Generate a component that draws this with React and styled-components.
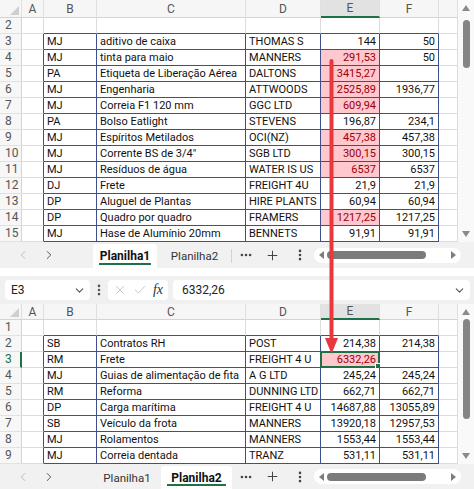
import React from 'react';
import styled, { createGlobalStyle, css } from 'styled-components';
import { ChevronLeft, ChevronRight, ChevronDown, Plus, EllipsisVertical, Ellipsis, X, Check } from 'lucide-react';

const GlobalStyle = createGlobalStyle`
  * { box-sizing: border-box; }
  body {
    margin: 0;
    background: #ffffff;
    font-family: Roboto, "Liberation Sans", Arial, sans-serif;
  }
`;

const NAVY = '#3d4f8c';
const GRID = '#dcdcdc';
const GREEN = '#1e7145';
const COLS = ['A', 'B', 'C', 'D', 'E', 'F', ''];
const WIDTHS = '22px 22px 53px 149px 75px 59px 59px 19px';

const topRows = [
  [2, []],
  [3, ['MJ', 'aditivo de caixa', 'THOMAS S', '144', '50']],
  [4, ['MJ', 'tinta para maio', 'MANNERS', '291,53', '50'], true],
  [5, ['PA', 'Etiqueta de Liberação Aérea', 'DALTONS', '3415,27', ''], true],
  [6, ['MJ', 'Engenharia', 'ATTWOODS', '2525,89', '1936,77'], true],
  [7, ['MJ', 'Correia F1 120 mm', 'GGC LTD', '609,94', ''], true],
  [8, ['PA', 'Bolso Eatlight', 'STEVENS', '196,87', '234,1']],
  [9, ['MJ', 'Espíritos Metilados', 'OCI(NZ)', '457,38', '457,38'], true],
  [10, ['MJ', 'Corrente BS de 3/4"', 'SGB LTD', '300,15', '300,15'], true],
  [11, ['MJ', 'Resíduos de água', 'WATER IS US', '6537', '6537'], true],
  [12, ['DJ', 'Frete', 'FREIGHT 4U', '21,9', '21,9']],
  [13, ['DP', 'Aluguel de Plantas', 'HIRE PLANTS', '60,94', '60,94']],
  [14, ['DP', 'Quadro por quadro', 'FRAMERS', '1217,25', '1217,25'], true],
  [15, ['MJ', 'Hase de Alumínio 20mm', 'BENNETS', '91,91', '91,91']],
];

const bottomRows = [
  [1, []],
  [2, ['SB', 'Contratos RH', 'POST', '214,38', '214,38']],
  [3, ['RM', 'Frete', 'FREIGHT 4 U', '6332,26', ''], true],
  [4, ['MJ', 'Guias de alimentação de fita', 'A G LTD', '245,24', '245,24']],
  [5, ['RM', 'Reforma', 'DUNNING LTD', '662,71', '662,71']],
  [6, ['DP', 'Carga marítima', 'FREIGHT 4 U', '14687,88', '13055,89']],
  [7, ['SB', 'Veículo da frota', 'MANNERS', '13920,18', '12957,53']],
  [8, ['MJ', 'Rolamentos', 'MANNERS', '1553,44', '1553,44']],
  [9, ['MJ', 'Correia dentada', 'TRANZ', '531,11', '531,11']],
];

const Page = styled.div`
  position: relative;
  width: 474px;
  height: 489px;
  overflow: hidden;
  display: flex;
  flex-direction: column;
`;

const Pane = styled.div`
  display: flex;
  height: ${({ $h }) => $h}px;
`;

const Grid = styled.div`
  display: grid;
  grid-template-columns: ${WIDTHS};
  grid-template-rows: ${({ $head }) => $head}px;
  grid-auto-rows: 16px;
  width: 458px;
  align-content: start;
`;

const HeadCell = styled.div`
  position: relative;
  background: ${({ $sel }) => ($sel ? '#e2e2e2' : '#f6f6f6')};
  border-right: 1px solid #e0e0e0;
  border-bottom: ${({ $sel }) => ($sel ? `2px solid ${GREEN}` : '1px solid #d4d4d4')};
  color: #555;
  font-size: 12px;
  display: flex;
  align-items: center;
  justify-content: center;
  ${({ $corner }) =>
    $corner &&
    css`
      &::after {
        content: '';
        position: absolute;
        right: 2px;
        bottom: 2px;
        border-left: 9px solid transparent;
        border-bottom: 9px solid #cfcfcf;
      }
    `}
`;

const RowNum = styled.div`
  background: #f7f7f7;
  border-bottom: 1px solid #e2e2e2;
  border-right: ${({ $sel }) => ($sel ? `2px solid ${GREEN}` : '1px solid #d4d4d4')};
  color: ${({ $sel }) => ($sel ? GREEN : '#555')};
  font-size: 12px;
  padding-left: 5px;
  line-height: 15px;
`;

const Cell = styled.div`
  position: relative;
  border-right: 1px solid ${({ $rb }) => $rb};
  border-bottom: 1px solid ${({ $bb }) => $bb};
  background: ${({ $hl }) => ($hl ? '#ffc7ce' : '#ffffff')};
  color: ${({ $hl }) => ($hl ? '#9c0006' : '#111')};
  font-size: 11px;
  line-height: 15px;
  padding: 0 3px;
  white-space: nowrap;
  overflow: hidden;
  text-align: ${({ $num }) => ($num ? 'right' : 'left')};
  ${({ $sel }) =>
    $sel &&
    css`
      overflow: visible;
      &::before {
        content: '';
        position: absolute;
        inset: -1px -1px -1px -1px;
        border: 2px solid ${GREEN};
      }
      &::after {
        content: '';
        position: absolute;
        right: -3px;
        bottom: -3px;
        width: 5px;
        height: 5px;
        background: ${GREEN};
        border: 1px solid #fff;
      }
    `}
`;

const VScroll = styled.div`
  width: 16px;
  background: #f9f9f9;
  display: flex;
  flex-direction: column;
  align-items: center;
  padding: 5px 0;
`;

const Arrow = styled.div`
  width: 0;
  height: 0;
  border-left: 4px solid transparent;
  border-right: 4px solid transparent;
  ${({ $down }) =>
    $down ? 'border-top: 6px solid #8a8a8a;' : 'border-bottom: 6px solid #8a8a8a;'}
`;

const Track = styled.div`
  flex: 1;
  width: 100%;
  display: flex;
  justify-content: center;
`;

const Thumb = styled.div`
  width: 7px;
  height: ${({ $h }) => $h}px;
  margin-top: ${({ $top }) => $top}px;
  border-radius: 4px;
  background: #858585;
`;

const TabBar = styled.div`
  height: ${({ $h }) => $h}px;
  background: #f1f1f1;
  display: flex;
  align-items: center;
  padding-left: 10px;
`;

const NavBtn = styled.div`
  width: 26px;
  display: flex;
  justify-content: center;
  color: ${({ $off }) => ($off ? '#b5b5b5' : '#444')};
`;

const Tabs = styled.div`
  margin-left: 31px;
  display: flex;
  align-self: stretch;
  align-items: stretch;
`;

const Tab = styled.div`
  position: relative;
  width: ${({ $w }) => $w}px;
  display: flex;
  align-items: center;
  justify-content: center;
  font-size: ${({ $active }) => ($active ? '12px' : '11.5px')};
  font-weight: ${({ $active }) => ($active ? 700 : 400)};
  color: ${({ $active }) => ($active ? '#111' : '#333')};
  background: ${({ $active }) => ($active ? '#ffffff' : 'transparent')};
  margin-top: 2px;
  border-radius: 3px 3px 0 0;
  ${({ $active }) =>
    $active &&
    css`
      &::after {
        content: '';
        position: absolute;
        left: 6px;
        right: 6px;
        bottom: 3px;
        height: 2px;
        background: ${GREEN};
      }
    `}
  ${({ $sep }) =>
    $sep &&
    css`
      &::before {
        content: '';
        position: absolute;
        right: 0;
        top: 5px;
        bottom: 5px;
        width: 1px;
        background: #d2d2d2;
      }
    `}
`;

const ToolBtn = styled.div`
  width: 27px;
  display: flex;
  justify-content: center;
  color: #444;
`;

const HScroll = styled.div`
  margin-left: 1px;
  width: 147px;
  height: 15px;
  border-radius: 8px;
  background: #ffffff;
  display: flex;
  align-items: center;
  padding: 0 5px;
  gap: 3px;
`;

const HArrow = styled.div`
  width: 0;
  height: 0;
  border-top: 4px solid transparent;
  border-bottom: 4px solid transparent;
  ${({ $right }) =>
    $right ? 'border-left: 5px solid #7d7d7d; margin-left: auto;' : 'border-right: 5px solid #7d7d7d;'}
`;

const HThumb = styled.div`
  width: 99px;
  height: 8px;
  border-radius: 4px;
  background: #7b7b7b;
`;

const Gap = styled.div`
  height: 8px;
  background: #ffffff;
`;

const FormulaBar = styled.div`
  height: 28px;
  background: #f0f0f0;
  display: flex;
  align-items: center;
  padding: 0 4px 0 5px;
`;

const Box = styled.div`
  height: 20px;
  background: #ffffff;
  border-radius: 4px;
  display: flex;
  align-items: center;
  font-size: 12px;
  color: #222;
`;

const NameBox = styled(Box)`
  width: 85px;
  padding: 0 4px 0 6px;
  justify-content: space-between;
`;

const Dots = styled.div`
  width: 18px;
  display: flex;
  justify-content: center;
  color: #555;
`;

const IconBox = styled(Box)`
  width: 60px;
  padding: 0 4px 0 5px;
  justify-content: space-between;
  color: #bbbbbb;
`;

const Fx = styled.span`
  font-family: "Liberation Serif", serif;
  font-style: italic;
  font-size: 14px;
  color: #333;
  padding-right: 1px;
`;

const InputBox = styled(Box)`
  flex: 1;
  margin-left: 5px;
  padding: 0 4px 0 9px;
  justify-content: space-between;
`;

const ArrowOverlay = styled.svg`
  position: absolute;
  left: 321px;
  top: 58px;
`;

const Sheet = ({ rows, head, tableFrom, selRow }) => {
  const lastRow = rows[rows.length - 1][0];
  const inTable = (r, c) => r >= tableFrom && r <= lastRow + 1 && c >= 1 && c <= 5;
  return (
    <Grid $head={head}>
      <HeadCell $corner />
      {COLS.map((c) => (
        <HeadCell key={c || 'g'} $sel={c === 'E'}>{c}</HeadCell>
      ))}
      {rows.map(([r, data, hl]) => (
        <React.Fragment key={r}>
          <RowNum $sel={r === selRow}>{r}</RowNum>
          {COLS.map((_, c) => {
            const value = c >= 1 && c <= 5 ? data[c - 1] : '';
            return (
              <Cell
                key={c}
                $rb={inTable(r, c) || inTable(r, c + 1) ? NAVY : GRID}
                $bb={inTable(r, c) || inTable(r + 1, c) ? NAVY : GRID}
                $num={c >= 4}
                $hl={hl && c === 4}
                $sel={r === selRow && c === 4}
              >
                {value}
              </Cell>
            );
          })}
        </React.Fragment>
      ))}
    </Grid>
  );
};

const SheetTabs = ({ active }) => (
  <TabBar $h={active === 1 ? 26 : 25}>
    <NavBtn $off><ChevronLeft size={14} strokeWidth={1.5} /></NavBtn>
    <NavBtn><ChevronRight size={14} strokeWidth={1.5} /></NavBtn>
    <Tabs>
      {active === 1 ? (
        <>
          <Tab $w={64} $active>Planilha1</Tab>
          <Tab $w={75} $sep>Planilha2</Tab>
        </>
      ) : (
        <>
          <Tab $w={68}>Planilha1</Tab>
          <Tab $w={71} $active>Planilha2</Tab>
        </>
      )}
    </Tabs>
    <ToolBtn><Ellipsis size={14} strokeWidth={2.5} /></ToolBtn>
    <ToolBtn><Plus size={15} strokeWidth={1.6} /></ToolBtn>
    <ToolBtn><EllipsisVertical size={14} strokeWidth={2.5} /></ToolBtn>
    <HScroll>
      <HArrow />
      <HThumb />
      <HArrow $right />
    </HScroll>
  </TabBar>
);

export default function App() {
  return (
    <Page>
      <GlobalStyle />
      <Pane $h={242}>
        <Sheet rows={topRows} head={18} tableFrom={3} />
        <VScroll>
          <Arrow />
          <Track><Thumb $top={9} $h={48} /></Track>
          <Arrow $down />
        </VScroll>
      </Pane>
      <SheetTabs active={1} />
      <Gap />
      <FormulaBar>
        <NameBox>E3<ChevronDown size={13} color="#555" /></NameBox>
        <Dots><EllipsisVertical size={14} strokeWidth={2.5} /></Dots>
        <IconBox>
          <X size={14} strokeWidth={1.4} />
          <Check size={14} strokeWidth={1.4} />
          <Fx>fx</Fx>
        </IconBox>
        <InputBox>6332,26<ChevronDown size={13} color="#555" /></InputBox>
      </FormulaBar>
      <Pane $h={160}>
        <Sheet rows={bottomRows} head={16} tableFrom={2} selRow={3} />
        <VScroll>
          <Arrow />
          <Track><Thumb $top={4} $h={100} /></Track>
          <Arrow $down />
        </VScroll>
      </Pane>
      <SheetTabs active={2} />
      <ArrowOverlay width="22" height="298" viewBox="0 0 22 298">
        <line x1="10.5" y1="3" x2="10.5" y2="282" stroke="#e8383d" strokeWidth="4" strokeLinecap="round" />
        <polygon points="4,280 17,280 10.5,296" fill="#e8383d" />
      </ArrowOverlay>
    </Page>
  );
}
